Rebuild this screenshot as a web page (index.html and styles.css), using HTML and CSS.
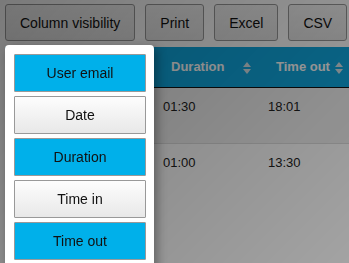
FILE: index.html
```html
<!DOCTYPE html>
<html lang="en">
<head>
<meta charset="UTF-8" />
<meta name="viewport" content="width=device-width, initial-scale=1.0" />
<title>Horas</title>
<link rel="stylesheet" href="styles.css">
</head>
<body>

<div class="pagina">
  <div class="barra">
    <button class="dt-btn">Column visibility</button>
    <button class="dt-btn">Print</button>
    <button class="dt-btn">Excel</button>
    <button class="dt-btn">CSV</button>
  </div>

  <table class="horas">
    <colgroup>
      <col class="c-email"><col class="c-dur"><col class="c-out">
    </colgroup>
    <thead>
      <tr>
        <th></th>
        <th><div class="th-in"><span>Duration</span><svg class="orden" width="8" height="12" viewBox="0 0 8 12"><path d="M4 0L8 5H0Z"/><path d="M0 7H8L4 12Z"/></svg></div></th>
        <th><div class="th-in"><span>Time out</span><svg class="orden" width="8" height="12" viewBox="0 0 8 12"><path d="M4 0L8 5H0Z"/><path d="M0 7H8L4 12Z"/></svg></div></th>
      </tr>
    </thead>
    <tbody>
      <tr class="impar"><td></td><td>01:30</td><td>18:01</td></tr>
      <tr><td></td><td>01:00</td><td>13:30</td></tr>
    </tbody>
  </table>
</div>

<div class="fondo"></div>

<div class="coleccion">
  <button class="col-btn activo">User email</button>
  <button class="col-btn">Date</button>
  <button class="col-btn activo">Duration</button>
  <button class="col-btn">Time in</button>
  <button class="col-btn activo">Time out</button>
</div>

</body>
</html>
```

FILE: styles.css
```css
html, body { margin: 0; padding: 0; overflow: hidden; }
body { font-family: "Liberation Sans", Arial, sans-serif; background: #fff; color: #222; width: 349px; height: 263px; }
.pagina { padding: 4px 5px 0; }
.barra { display: flex; gap: 10px; }
.dt-btn { flex-shrink: 0; white-space: nowrap; height: 37px; padding: 0 14px; box-sizing: border-box; font-family: inherit; font-size: 14px; color: #111; border: 1px solid #999; border-radius: 3px; background: linear-gradient(to bottom, #f4f4f4 0%, #e4e4e4 100%); }
.horas { margin-top: 6px; border-collapse: separate; border-spacing: 0; table-layout: fixed; width: 345px; font-size: 13px; }
.c-email { width: 148px; }
.c-dur { width: 105px; }
.c-out { width: 92px; }
.horas th { height: 16px; background: #10a8e0; color: #fff; font-weight: bold; text-align: left; padding: 12px 7px 12px 18px; line-height: 16px; border-bottom: 1px solid #111; white-space: nowrap; }
.th-in { display: flex; justify-content: space-between; align-items: center; }
.orden { fill: #d6e4ea; margin-top: 1px; }
.horas td { height: 16px; padding: 11px 10px 28px; line-height: 16px; vertical-align: top; white-space: nowrap; overflow: hidden; }
.horas tbody tr + tr td { border-top: 1px solid #ddd; }
.impar td { background: #f1f1f1; }
.fondo { position: fixed; inset: 0; background: linear-gradient(135deg, rgba(0,0,0,0.52) 0%, rgba(0,0,0,0.36) 100%); }
.coleccion { position: absolute; left: 5px; top: 45px; width: 149px; box-sizing: border-box; padding: 9px 8px 9px 9px; background: #fff; border-radius: 4px; box-shadow: 3px 4px 10px 1px rgba(0,0,0,0.3); }
.col-btn { display: block; width: 100%; height: 38px; margin: 0 0 4px; box-sizing: border-box; font-family: inherit; font-size: 14px; color: #111; border: 1px solid #999; border-radius: 1px; background: linear-gradient(to bottom, #fdfdfd 0%, #e8e8e8 100%); }
.col-btn.activo { background: #00b0ea; }
```
